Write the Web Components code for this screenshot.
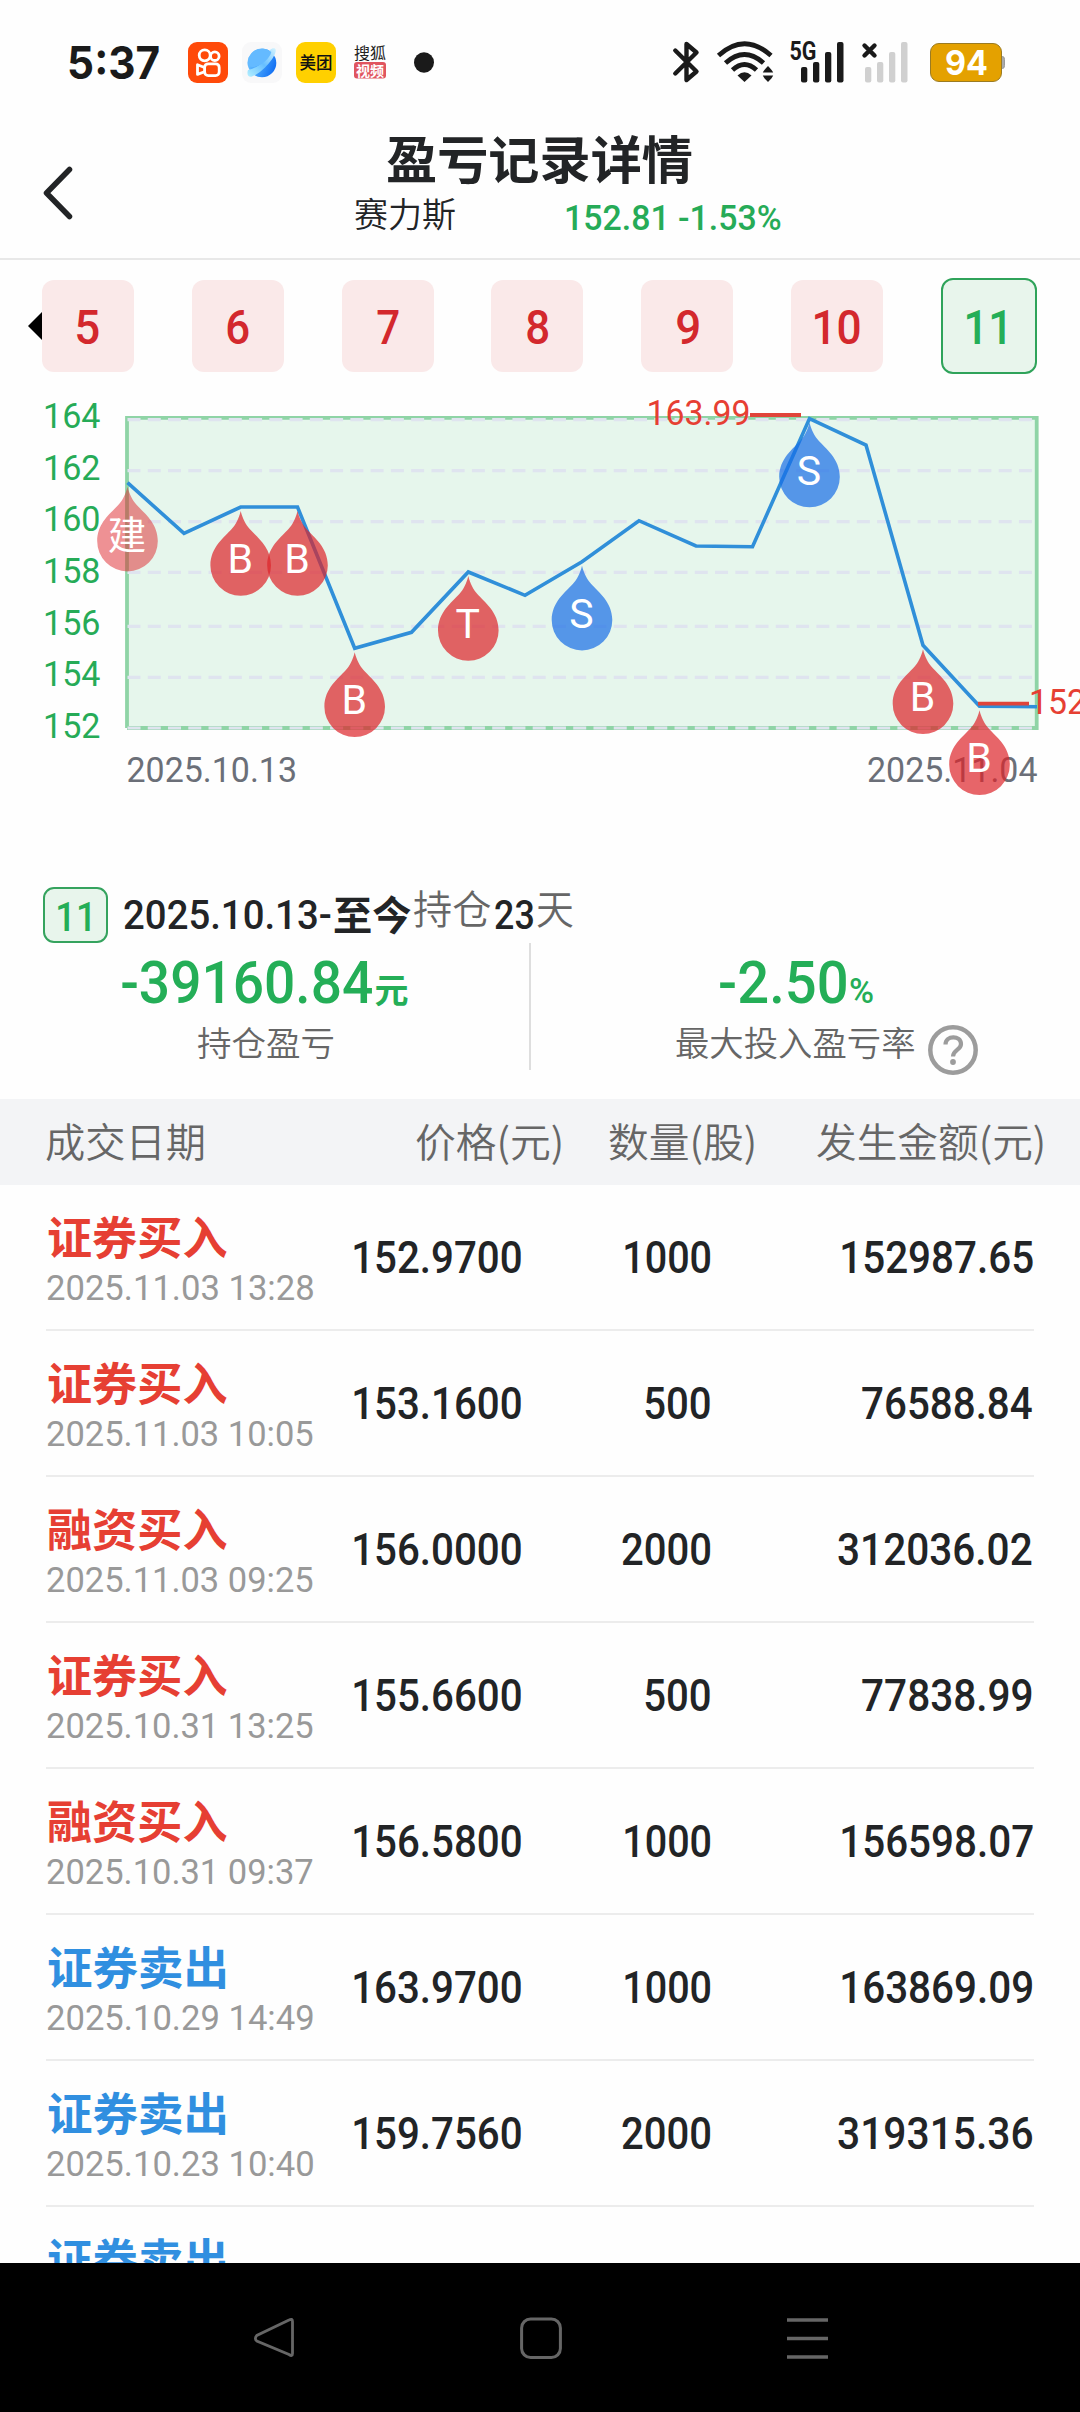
<!DOCTYPE html>
<html lang="zh-CN">
<head>
<meta charset="utf-8">
<title>盈亏记录详情</title>
<style>
html,body{margin:0;padding:0;background:#fefefe}
body{width:1080px;height:2412px;overflow:hidden}
</style>
</head>
<body>
<pnl-app></pnl-app>
<script>
const CJK = '"Noto Sans CJK SC", sans-serif';
const NUM = 'Roboto, "Noto Sans CJK SC", sans-serif';
const measure = document.createElement('canvas').getContext('2d');

function define(name, css, html, init) {
  customElements.define(name, class extends HTMLElement {
    connectedCallback() {
      if (this.shadowRoot) return;
      const root = this.attachShadow({ mode: 'open' });
      root.innerHTML = `<style>*{box-sizing:border-box}${css}</style>` + (typeof html === 'function' ? html(this) : html);
      if (init) init(this, root);
    }
  });
}

/* One line of text whose inked width equals the "w" attribute. */
define('fit-text',
  ':host{display:block;flex:none;white-space:nowrap;line-height:1}span{display:block;width:max-content;transform-origin:0 0}',
  el => `<span>${el.getAttribute('t')}</span>`,
  (el, root) => {
    const size = +el.getAttribute('s'), weight = el.getAttribute('b') || 400, w = +el.getAttribute('w');
    const kind = el.getAttribute('k');
    const family = kind === 'cjk' ? CJK : kind === 'inter' ? 'Inter, sans-serif' : NUM;
    const span = root.querySelector('span');
    span.style.font = `${weight} ${size}px/1 ${family}`;
    measure.font = `${weight} ${size}px ${family}`;
    const m = measure.measureText(el.getAttribute('t'));
    const k = w / (m.actualBoundingBoxLeft + m.actualBoundingBoxRight);
    el.style.width = w + 'px';
    el.style.height = size + 'px';
    span.style.transform = `translateX(${m.actualBoundingBoxLeft * k}px) scaleX(${k})`;
  });

define('status-bar', `
:host{display:flex;align-items:center;height:124px;padding:0 75px 0 69px;color:#1a1a1a}
svg{display:block;flex:none;overflow:visible}
.end{display:flex;align-items:center;margin-left:auto}`, `
<fit-text t="5:37" s="45" b="700" w="90" k="inter"></fit-text>
<svg style="margin-left:28.500px" width="40" height="41" viewBox="0 0 40 41"><rect width="40" height="41" rx="9" fill="#ff4a0a"/><g fill="none" stroke="#fff" stroke-width="2.800"><circle cx="16.700" cy="13.300" r="5.500"/><circle cx="26.800" cy="14.200" r="4.300"/><rect x="16.600" y="21.800" width="14.600" height="11.800" rx="3.600"/><path d="M16.500 25.500L9.500 22.800v9.600l7-2.700" stroke-linejoin="round"/></g></svg>
<svg style="margin-left:14px" width="40" height="41" viewBox="0 0 40 41"><defs><linearGradient id="a" x1="0" y1="0.300" x2="1" y2="0.700"><stop offset="0" stop-color="#6fc5ff"/><stop offset=".5" stop-color="#3f9dfb"/><stop offset="1" stop-color="#0f6cf2"/></linearGradient><linearGradient id="b" x1="0" y1="1" x2="1" y2="0"><stop offset="0" stop-color="#b4f0ff"/><stop offset=".5" stop-color="#66bfff"/><stop offset="1" stop-color="#d4f4ff"/></linearGradient></defs><rect width="40" height="41" rx="9" fill="#f8f8f9"/><circle cx="20" cy="21" r="14.300" fill="url(#a)"/><path d="M6 28C4.500 32 6 35.500 10 34.500C20 31 34 15 33.800 8C33.500 5.500 30 6 28 8C26 18 14 27 6 28Z" fill="url(#b)"/><path d="M6 24A14.300 14.300 0 0 1 29.300 10C27.500 18 14 28.500 6 24Z" fill="#64baff"/></svg>
<svg style="margin-left:14px" width="40" height="41" viewBox="0 0 40 41"><rect width="40" height="41" rx="9" fill="#ffd000"/><text x="3.600" y="27" font-family="Noto Sans CJK SC" font-weight="500" font-size="17" textLength="33" lengthAdjust="spacingAndGlyphs" fill="#111">美团</text></svg>
<svg style="margin-left:18px" width="32" height="34" viewBox="0 0 32 34"><text x="0" y="13.500" font-family="Noto Sans CJK SC" font-weight="400" font-size="15.500" textLength="32" lengthAdjust="spacingAndGlyphs" fill="#222">搜狐</text><rect y="17" width="32" height="16.500" rx="3" fill="#e0555f"/><text x="2" y="30.500" font-family="Noto Sans CJK SC" font-weight="700" font-size="14" textLength="28" lengthAdjust="spacingAndGlyphs" fill="#fff">视频</text></svg>
<svg style="margin-left:28px" width="20" height="21"><ellipse cx="10" cy="10.500" rx="10" ry="10.200" fill="#1a1a1a"/></svg>
<div class="end">
<svg width="26" height="42" viewBox="0 0 26 42"><path d="M2.300 9.500L23.500 30.500L13.500 39V3L23.500 11.500L2.300 32.500" fill="none" stroke="#1a1a1a" stroke-width="4.400" stroke-linejoin="round" stroke-linecap="round"/></svg>
<svg style="margin-left:18px" width="57" height="42" viewBox="0 0 57 42"><g fill="none" stroke="#1a1a1a" stroke-width="4.800"><path d="M1.500 14.500Q27.500-9 54 14.500"/><path d="M8.500 22Q27.500 5 46.500 22"/><path d="M15.500 29Q27.500 18 39.500 29"/></g><path d="M20.500 34.500Q27.500 28 34.500 34.500L27.500 41Z" fill="#1a1a1a"/><path d="M45.800 31.500q1-2.500 5.200-6.500q4.200 4 5.200 6.500zM45.800 34.500q1 2.500 5.200 6.500q4.200-4 5.200-6.500z" fill="#1a1a1a"/></svg>
<svg style="margin-left:16px" width="54" height="42" viewBox="0 0 54 42"><text x="-.5" y="18.500" font-family="Roboto" font-weight="700" font-size="25" textLength="27" lengthAdjust="spacingAndGlyphs" fill="#1a1a1a">5G</text><g fill="#1a1a1a"><rect x="11" y="26" width="6.300" height="15.500" rx="2"/><rect x="23" y="21" width="6.300" height="20.500" rx="2"/><rect x="35" y="11" width="6.300" height="30.500" rx="2"/><rect x="47" y="1" width="6.500" height="40.500" rx="2"/></g></svg>
<svg style="margin-left:18px" width="46" height="42" viewBox="0 0 46 42"><path d="M2.500 4.500L12.500 14.500M12.500 4.500L2.500 14.500" stroke="#1a1a1a" stroke-width="4.400" stroke-linecap="round"/><g fill="#d0d0d0"><rect x="3" y="26" width="6.300" height="15.500" rx="2"/><rect x="15" y="21" width="6.300" height="20.500" rx="2"/><rect x="27" y="11" width="6.300" height="30.500" rx="2"/><rect x="39" y="1" width="6.500" height="40.500" rx="2"/></g></svg>
<svg style="margin-left:22px" width="75" height="40" viewBox="0 0 75 40"><path d="M71 14.500h1.500q2 0 2 3v6q0 3-2 3h-1.500z" fill="#aaa" stroke="#999"/><rect x=".5" y="1.500" width="71" height="38" rx="8.500" fill="#e4a100" stroke="#9b7b22"/><text x="15" y="32.500" font-family="Inter" font-weight="700" font-size="34.500" textLength="43" lengthAdjust="spacingAndGlyphs" fill="#fff">94</text></svg>
</div>`);

define('page-header', `
:host{display:flex;height:136px;border-bottom:2px solid #e8e8e8;color:#222426}
svg{flex:none;margin:41px 0 0 42px}
.titles{margin-left:281px}
.sub{display:flex;color:#222426}`, `
<svg width="32" height="56" viewBox="0 0 32 56"><path d="M27.500 4.500L4.500 28L27.500 51.500" fill="none" stroke="#222426" stroke-width="5.500" stroke-linecap="round" stroke-linejoin="round"/></svg>
<div class="titles">
<fit-text k="cjk" t="盈亏记录详情" s="51" b="700" w="305" style="margin:8px 0 0 32px"></fit-text>
<div class="sub"><fit-text k="cjk" t="赛力斯" s="34.500" b="350" w="100.500" style="margin-top:11.500px"></fit-text>
<fit-text t="152.81 -1.53%" s="35.500" b="500" w="214.500" style="margin:17.500px 0 0 110px;color:#26ab57"></fit-text></div>
</div>`);

define('round-tab', `
:host{display:flex;flex:none;justify-content:center;width:92px;height:92px;border-radius:12px;background:#fae9e9;color:#d3282d}
:host([on]){width:96px;height:96px;border:2px solid #2fa35a;background:#e8f5ec;color:#24ae57}`,
  el => `<fit-text t="${el.getAttribute('n')}" s="49" b="500" w="${el.getAttribute('w')}" style="margin:23px ${el.hasAttribute('on') ? 5 : 0}px 0 0"></fit-text>`);

define('round-tabs', `
:host{display:flex;align-items:center;height:132px;padding:0 43px 0 28px}
.list{flex:1;display:flex;align-items:center;justify-content:space-between}
svg{flex:none}`, `
<svg width="14" height="28"><path d="M14 0V28L0 14Z" fill="#000"/></svg>
<div class="list">${[[5, 21.5], [6, 21.5], [7, 21.5], [8, 21.5], [9, 21.5], [10, 45]].map(([n, w]) => `<round-tab n="${n}" w="${w}"></round-tab>`).join('')}<round-tab on n="11" w="38"></round-tab></div>`);

define('price-chart', ':host{display:block;height:468px}svg{display:block}', () => {
  const top = 392;
  const pts = [[127.5,482.7],[184,533.3],[240.7,507],[297.5,507],[354.7,648.3],[411.5,632.3],[468.3,572],[525,595.3],[582,561.7],[639,520.7],[696,546],[752.5,546.7],[809.5,418.6],[866,445],[923,645.3],[979.5,706.3],[1037,706.7]];
  const marks = [[0,'建'],[2,'B'],[3,'B'],[4,'B'],[6,'T'],[8,'S'],[12,'S'],[14,'B'],[15,'B']];
  const drop = 'M0 0C2 8 5 13.500 9 18C16 26 30.300 36 30.300 54.400A30.300 30.300 0 0 1-30.300 54.400C-30.300 36-16 26-9 18C-5 13.500-2 8 0 0Z';
  const text = (s, x, y, len, fill) => `<text x="${x}" y="${y}" textLength="${len}" lengthAdjust="spacingAndGlyphs" fill="${fill}">${s}</text>`;
  const grid = [419.6,470.7,521.7,572.3,626.3,677.3,728];
  return `<svg width="1080" height="468" viewBox="0 ${top} 1080 468" font-family='${NUM}' font-size="34.500">
<rect x="127" y="417.500" width="909.500" height="310.500" fill="#e6f6ec"/>
<path d="M127 728V417.800H1036.700V728H127" fill="none" stroke="#8fd4a6" stroke-width="3.800"/>
${grid.map(y => `<path d="M127.500 ${y}H1032" stroke="#dfe4ef" stroke-width="3.200" stroke-dasharray="13 7.260"/>`).join('')}
${[164,162,160,158,156,154,152].map((v, i) => text(v, 43, [428.3,479.5,531.3,582.5,634.7,686,738.2][i], 57.5, '#26ab57')).join('')}
${text('2025.10.13', 126.500, 782, 170.500, '#6b6f78')}${text('2025.11.04', 867, 782, 170.500, '#6b6f78')}
<polyline points="${pts.map(p => p.join()).join(' ')}" fill="none" stroke="#308fd9" stroke-width="3.600"/>
${text('163.99', 646.500, 425, 104, '#e63f33')}${text('152', 1029, 714, 57, '#e63f33')}
<path d="M750 415H801M978 703.700H1029" stroke="#e0443a" stroke-width="3.800"/>
${marks.map(([i, s]) => {
    const [x, y] = pts[i];
    const fill = s === 'S' ? 'rgba(23,109,231,.7)' : s === '建' ? 'rgba(221,36,42,.5)' : 'rgba(221,36,42,.7)';
    return `<path transform="translate(${x} ${y + 4})" d="${drop}" fill="${fill}"/><text x="${x - .5}" y="${y + (s === '建' ? 66 : 66)}" text-anchor="middle" font-size="${s === '建' ? 38.5 : 41}" fill="#fff">${s}</text>`;
  }).join('')}
</svg>`;
});

define('holding-summary', `
:host{display:block;height:238.500px;color:#222426}
.range{display:flex;height:83px;padding:27px 0 0 43px}
.badge{width:65px;height:56px;border:2px solid #35a35e;border-radius:11px;background:#e8f5ec;color:#24ae57;display:flex;justify-content:center}
.grey{color:#666}
.stats{display:flex;height:127px}
.stat{width:529px;display:flex;flex-direction:column;align-items:center}
.stat+.stat{width:551px;border-left:2px solid #dedede}
.value{display:flex;color:#24ae57;height:72px}
.label{display:flex;color:#666}
svg{display:block}`, `
<div class="range"><div class="badge"><fit-text t="11" s="41" b="500" w="32" style="margin:7.500px 3px 0 0"></fit-text></div>
<fit-text t="2025.10.13-" s="40.500" b="500" w="207" style="margin:8px 0 0 15.500px"></fit-text>
<fit-text k="cjk" t="至今" s="39.500" b="700" w="77" style="margin:6px 0 0 3.500px"></fit-text>
<fit-text class="grey" k="cjk" t="持仓" s="40" b="350" w="76.500" style="margin:0 0 0 3px"></fit-text>
<fit-text t="23" s="40.500" b="500" w="38" style="margin:8px 0 0 4px"></fit-text>
<fit-text class="grey" k="cjk" t="天" s="40" b="350" w="36" style="margin:0 0 0 4.500px"></fit-text></div>
<div class="stats">
<div class="stat"><div class="value"><fit-text t="-39160.84" s="59.500" b="500" w="250.500" style="margin-top:11px"></fit-text><fit-text k="cjk" t="元" s="34" b="700" w="32" style="margin:28.500px 0 0 3.500px"></fit-text></div>
<div class="label"><fit-text k="cjk" t="持仓盈亏" s="34" b="350" w="136" style="margin-top:9.500px"></fit-text></div></div>
<div class="stat"><div class="value" style="margin-right:18px"><fit-text t="-2.50" s="59.500" b="500" w="126" style="margin-top:11px"></fit-text><fit-text t="%" s="35.500" b="500" w="23" style="margin:31px 0 0 4.500px"></fit-text></div>
<div class="label" style="margin-left:43px"><fit-text k="cjk" t="最大投入盈亏率" s="34.500" b="350" w="238" style="margin-top:10px"></fit-text>
<svg style="margin:11px 0 0 13.500px" width="50" height="50" viewBox="0 0 50 50"><circle cx="25" cy="25" r="22.700" fill="none" stroke="#9c9c9c" stroke-width="4.500"/><path d="M17.500 19.500C17.500 10 33 10 33 19C33 25 25 25 25 31.500" fill="none" stroke="#9c9c9c" stroke-width="4.200"/><circle cx="25" cy="37" r="2.900" fill="#9c9c9c"/></svg></div></div>
</div>`);

define('table-head', ':host{display:flex;height:86.500px;padding:21.500px 37px 0 46px;background:#f3f4f6;color:#666}', `
<fit-text k="cjk" t="成交日期" s="40" b="350" w="157"></fit-text>
<fit-text k="cjk" t="价格(元)" s="40" b="350" w="145" style="margin-left:212.500px"></fit-text>
<fit-text k="cjk" t="数量(股)" s="40" b="350" w="145" style="margin-left:48.500px"></fit-text>
<fit-text k="cjk" t="发生金额(元)" s="40" b="350" w="226" style="margin-left:auto"></fit-text>`);

define('trade-row', `
:host{display:flex;height:146px;margin:0 46px;border-bottom:2px solid #ececec;color:#222426;flex:none}
.kind{width:308.200px;color:#e63f33}
.kind.sell{color:#308fe0}
.date{color:#999}
.qty{display:flex;justify-content:flex-end;width:189px}
.sum{display:flex;justify-content:flex-end;width:322px}`,
  el => {
    const [kind, date, price, qty, qw, sum, sw] = el.getAttribute('d').split('|');
    const num = (t, w) => `<fit-text t="${t}" s="43.500" b="500" w="${w}" style="margin-top:52.200px"></fit-text>`;
    return `<div class="kind ${kind.endsWith('出') ? 'sell' : ''}"><fit-text k="cjk" t="${kind}" s="45" b="700" w="${kind.endsWith('出') ? 177 : 178.5}" style="margin:27.800px 0 0 1.500px"></fit-text>
${date ? `<fit-text class="date" t="${date}" s="35" w="266" style="margin:13.700px 0 0 .5px"></fit-text>` : ''}</div>
${price ? num(price, 167) + `<div class="qty">${num(qty, qw)}</div><div class="sum">${num(sum, sw)}</div>` : ''}`;
  });

define('trade-list', ':host{display:flex;flex-direction:column;height:1078px;overflow:hidden}', [
  '证券买入|2025.11.03 13:28|152.9700|1000|85.5|152987.65|190.5',
  '证券买入|2025.11.03 10:05|153.1600|500|65|76588.84|170',
  '融资买入|2025.11.03 09:25|156.0000|2000|88.5|312036.02|194',
  '证券买入|2025.10.31 13:25|155.6600|500|65|77838.99|170',
  '融资买入|2025.10.31 09:37|156.5800|1000|85.5|156598.07|190.5',
  '证券卖出|2025.10.29 14:49|163.9700|1000|85.5|163869.09|190.5',
  '证券卖出|2025.10.23 10:40|159.7560|2000|88.5|319315.36|194',
  '证券卖出'
].map(d => `<trade-row d="${d}"></trade-row>`).join(''));

define('nav-bar', ':host{display:flex;height:149px;padding:53.500px 251px 0 252.500px;justify-content:space-between;background:#000}svg{display:block}', `
<svg width="42" height="42" viewBox="0 0 42 42"><path d="M39.500 4.500V36.500Q39.500 40 36 37.500L3.800 24Q1 21.500 3.800 18.500L36 3Q39.500 1 39.500 4.500Z" fill="none" stroke="#666" stroke-width="2.800"/></svg>
<svg width="42" height="42" viewBox="0 0 42 42"><rect x="1.600" y="2" width="38.800" height="38.500" rx="9" fill="none" stroke="#666" stroke-width="3"/></svg>
<svg width="42" height="42" viewBox="0 0 42 42"><path d="M0 3H41M0 21.500H41M0 40H41" stroke="#666" stroke-width="3.600"/></svg>`);

define('pnl-app', ':host{display:flex;flex-direction:column;width:1080px;height:2412px;background:#fefefe;overflow:hidden}:host>*{flex:none}', `
<status-bar></status-bar><page-header></page-header><round-tabs></round-tabs><price-chart></price-chart>
<holding-summary></holding-summary><table-head></table-head><trade-list></trade-list><nav-bar></nav-bar>`);
</script>
</body>
</html>
